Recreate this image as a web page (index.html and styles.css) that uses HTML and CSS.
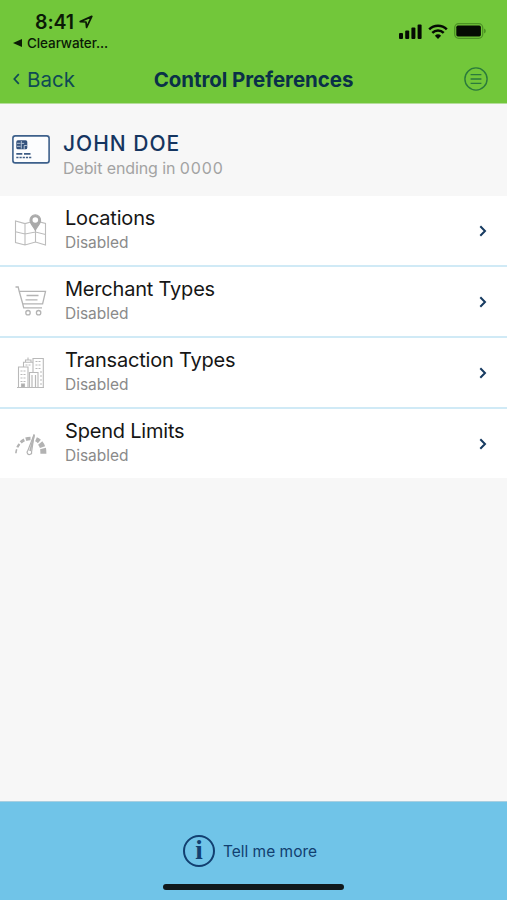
FILE: index.html
```html
<!DOCTYPE html>
<html lang="en">
<head>
    <meta charset="UTF-8">
    <meta name="viewport" content="width=device-width, initial-scale=1.0">
    <title>Control Preferences</title>
    <link rel="stylesheet" href="styles.css">
</head>
<body>
    <header class="header">
        <div class="status-bar">
            <div class="status-left">
                <div class="clock">
                    <span class="time">8:41</span>
                    <svg width="14" height="14" viewBox="0 0 14 14"><path d="M1.2 6.6 12.8 1.4 7.6 12.4 7 7Z" fill="none" stroke="#0b1a06" stroke-width="1.7" stroke-linejoin="round"/></svg>
                </div>
                <div class="return-app">
                    <svg width="9" height="8" viewBox="0 0 9 8"><path d="M0 4 9 0V8Z" fill="#0b1a06"/></svg>
                    <span>Clearwater...</span>
                </div>
            </div>
            <div class="status-right">
                <svg width="23" height="15" viewBox="0 0 23 15" fill="#050b03">
                    <rect x="0" y="9" width="4" height="6" rx="1"/>
                    <rect x="6.2" y="6.6" width="4" height="8.4" rx="1"/>
                    <rect x="12.4" y="3.6" width="4" height="11.4" rx="1"/>
                    <rect x="18.6" y="0.4" width="4" height="14.6" rx="1"/>
                </svg>
                <svg width="20" height="15" viewBox="0 0 20 15" fill="none" stroke="#050b03" stroke-width="2.5">
                    <path d="M1.2 5.4a12.6 12.6 0 0 1 17.6 0"/>
                    <path d="M4.3 8.8a8.2 8.2 0 0 1 11.4 0"/>
                    <path d="M10 15 6.9 11.8a4.5 4.5 0 0 1 6.2 0Z" fill="#050b03" stroke="none"/>
                </svg>
                <svg width="32" height="16" viewBox="0 0 32 16">
                    <rect x="0.7" y="0.7" width="28" height="14.6" rx="4" fill="none" stroke="#4c9324" stroke-width="1.3"/>
                    <rect x="2.3" y="2.6" width="24.6" height="10.8" rx="1.6" fill="#050b03"/>
                    <path d="M30 5.5a2.6 2.6 0 0 1 0 5Z" fill="#4c9324"/>
                </svg>
            </div>
        </div>
        <nav class="nav-bar">
            <a class="back">
                <svg width="7" height="12" viewBox="0 0 7 12"><path d="M5.8 1.2 1.3 6l4.5 4.8" fill="none" stroke="#0f4a55" stroke-width="1.7"/></svg>
                <span>Back</span>
            </a>
            <h1 class="title">Control Preferences</h1>
            <svg class="menu" width="24" height="24" viewBox="0 0 24 24" fill="none" stroke="#2b7a3c" stroke-width="1.4">
                <circle cx="12" cy="12" r="11.1"/>
                <path d="M6.6 7.6h10.8M6.6 12h10.8M6.6 16.4h10.8"/>
            </svg>
        </nav>
    </header>

    <section class="card">
        <svg class="card-icon" width="38" height="29" viewBox="0 0 38 29">
            <rect x="0.9" y="0.9" width="36.2" height="27" rx="2.4" fill="#fcfdfe" stroke="#3d608b" stroke-width="1.6"/>
            <rect x="4.3" y="5.3" width="11" height="9" rx="1.6" fill="#34527d"/>
            <path d="M5 8.3h3.5M5 11.3h3.5M9.3 6v7.6M9.3 8.4h2.9M12.2 14v-3.5h2.6" fill="none" stroke="#c3cfdd" stroke-width="0.9"/>
            <path d="M4.3 18.9h6M12 18.9h6.5" stroke="#3d5c84" stroke-width="1.6"/>
            <path d="M4.3 22.6h15.5" stroke="#3d5c84" stroke-width="1.5" stroke-dasharray="2.2 1"/>
        </svg>
        <div>
            <div class="card-name">JOHN DOE</div>
            <div class="card-number">Debit ending in <span class="digits">0000</span></div>
        </div>
    </section>

    <main class="list">
        <a class="row">
            <svg class="row-icon" width="34" height="34" viewBox="0 0 34 34" fill="none" stroke="#bcbcbc" stroke-width="1.1">
                <path d="M11 10.6 1.5 8v21.5L11 32l10.5-3 10 3V10.5l-6-1.6M11 10.6V32M21.5 16v13M11 10.6l5-1.4M1.5 18.8 11 21l10.5-2 10 2.5"/>
                <path d="M21.3 17.3c-1.3-3.2-5.3-6.3-5.3-10.1a5.3 5.3 0 0 1 10.6 0c0 3.8-4 6.9-5.3 10.1Z" fill="#aaa" stroke="#aaa"/>
                <circle cx="21.3" cy="7" r="2.8" fill="#fff" stroke="none"/>
            </svg>
            <div class="row-text">
                <div class="row-title">Locations</div>
                <div class="row-status">Disabled</div>
            </div>
            <svg class="chevron" width="8" height="12" viewBox="0 0 8 12"><path d="M1.3 1.2 6 6 1.3 10.8"/></svg>
        </a>
        <a class="row">
            <svg class="row-icon" width="34" height="34" viewBox="0 0 34 34" fill="none" stroke="#b4b4b4" stroke-width="1.3">
                <path d="M1.5 3h2.7l1 4.3h26.3l-2.9 12.5H8.7L5.2 7.3M8.7 19.8l1 4H28"/>
                <path d="M12.5 11.5h12M11.5 15.8h12"/>
                <circle cx="14" cy="28.7" r="2.2"/>
                <circle cx="24.6" cy="28.7" r="2.2"/>
            </svg>
            <div class="row-text">
                <div class="row-title">Merchant Types</div>
                <div class="row-status">Disabled</div>
            </div>
            <svg class="chevron" width="8" height="12" viewBox="0 0 8 12"><path d="M1.3 1.2 6 6 1.3 10.8"/></svg>
        </a>
        <a class="row">
            <svg class="row-icon" width="34" height="34" viewBox="0 0 34 34" fill="none" stroke="#b9b9b9" stroke-width="1.1">
                <path d="M3 32.5h27M4.5 32.5V12H14v20.5M9.5 12V7.3H19V17M11.5 7V5H17v2M14 2.5V5M19 17V3.5h10.3v29M15.500 32.5v-15H24v15"/>
                <path d="M6.5 16H12M6.5 19.5H12M6.5 23H12M6.5 26.5H12M21.5 6.5h6M21.5 10h6M21.5 13.5h6M26 17h2M26 21h2M26 25h2M26 29h2M11.5 10h5" stroke-dasharray="2 1"/>
                <path d="M18 20v12M21.500 20v12" stroke-width="1.2"/>
                <rect x="7.5" y="29" width="3" height="3" fill="#aaa"/>
            </svg>
            <div class="row-text">
                <div class="row-title">Transaction Types</div>
                <div class="row-status">Disabled</div>
            </div>
            <svg class="chevron" width="8" height="12" viewBox="0 0 8 12"><path d="M1.3 1.2 6 6 1.3 10.8"/></svg>
        </a>
        <a class="row">
            <svg class="row-icon" width="34" height="34" viewBox="0 0 34 34" fill="none" stroke="#b2b2b2">
                <path d="M1.9 27.2c.1-1.5.3-2.7.8-4" stroke-width="1.6"/>
                <path d="M3.3 21.4c.6-1.4 1.3-2.5 2.2-3.5" stroke-width="2.2"/>
                <path d="M6.7 16.3c1.1-1 2.3-1.8 3.6-2.4" stroke-width="3"/>
                <path d="M11.8 13.2c1.5-.5 2.8-.7 4.7-.7" stroke-width="3.6"/>
                <path d="M22 13.3c1.4.6 2.4 1.3 3.4 2.2" stroke-width="4.5"/>
                <path d="M26.2 17c1.1 1.3 1.8 2.7 2.3 4.1" stroke-width="5.5"/>
                <path d="M29 22.5c.3 1.3.4 2.8.4 5.2" stroke-width="6"/>
                <path d="M20.2 8.3 17.6 25.6a2.3 2.3 0 1 1-3.8-1Z" stroke-width="1.2" fill="#fff"/>
                <path d="M20.2 9 16 25" stroke-width="1.7"/>
            </svg>
            <div class="row-text">
                <div class="row-title">Spend Limits</div>
                <div class="row-status">Disabled</div>
            </div>
            <svg class="chevron" width="8" height="12" viewBox="0 0 8 12"><path d="M1.3 1.2 6 6 1.3 10.8"/></svg>
        </a>
    </main>

    <footer class="footer">
        <a class="tell-more">
            <span class="info">i</span>
            <span>Tell me more</span>
        </a>
        <div class="home-indicator"></div>
    </footer>
</body>
</html>
```
FILE: styles.css
```css
* {
    box-sizing: border-box;
}
body {
    margin: 0;
    height: 900px;
    display: flex;
    flex-direction: column;
    font-family: Inter, "Liberation Sans", sans-serif;
    background: #f7f7f7;
    overflow: hidden;
}
svg {
    display: block;
    flex: none;
}
.header {
    height: 104px;
    background: #72c73a;
    border-bottom: 1px solid #b5dd9b;
}
.status-bar {
    display: flex;
    justify-content: space-between;
    height: 55px;
    padding: 10px 21px 0 13px;
    color: #0b1a06;
}
.clock {
    display: flex;
    align-items: center;
    gap: 5px;
    height: 24px;
    padding-left: 22px;
}
.time {
    font-size: 19.5px;
    font-weight: 600;
    letter-spacing: -0.1px;
}
.return-app {
    display: flex;
    align-items: center;
    gap: 5px;
    height: 18px;
    font-size: 13.5px;
    font-weight: 500;
    letter-spacing: -0.1px;
}
.status-right {
    display: flex;
    align-items: center;
    gap: 6px;
    height: 42px;
}
.nav-bar {
    display: grid;
    grid-template-columns: 1fr auto 1fr;
    align-items: center;
    height: 48px;
    padding: 0 19px 0 13px;
}
.back {
    display: flex;
    align-items: center;
    gap: 7px;
    font-size: 20.5px;
    color: #0f4a55;
}
.title {
    margin: 0 -3px 0 3px;
    font-size: 20.5px;
    font-weight: 700;
    letter-spacing: -0.05px;
    color: #0a3048;
}
.menu {
    justify-self: end;
}
.card {
    display: flex;
    gap: 13px;
    height: 92px;
    padding: 27px 12px 0;
}
.card-icon {
    margin-top: 4px;
}
.card-name {
    font-size: 21px;
    line-height: 26px;
    font-weight: 500;
    letter-spacing: 1px;
    color: #153560;
}
.card-number {
    font-size: 16px;
    line-height: 23px;
    letter-spacing: -0.1px;
    color: #a3a3a3;
}
.digits {
    letter-spacing: 0.9px;
}
.list {
    background: #fff;
}
.row {
    display: flex;
    height: 71px;
    padding: 10px 20px 0 14px;
    border-bottom: 2px solid #d0eaf6;
}
.row:last-child {
    height: 69px;
    border-bottom: none;
}
.row-icon {
    margin-top: 7px;
}
.row-text {
    flex: 1;
    padding-left: 17px;
}
.row-title {
    font-size: 20px;
    line-height: 24px;
    letter-spacing: -0.2px;
    color: #161616;
}
.row-status {
    font-size: 15.5px;
    line-height: 25px;
    color: #8a8a8a;
}
.chevron {
    margin-top: 19px;
    fill: none;
    stroke: #173b61;
    stroke-width: 2;
}
.footer {
    display: flex;
    flex-direction: column;
    align-items: center;
    height: 99px;
    margin-top: auto;
    padding-top: 33px;
    background: #70c4e8;
    border-top: 1px solid #a9cfe0;
}
.tell-more {
    display: flex;
    align-items: center;
    gap: 8px;
    margin-right: 7px;
    font-size: 15.5px;
    color: #123f70;
}
.info {
    width: 32px;
    height: 32px;
    border: 2px solid #123f70;
    border-radius: 50%;
    font-family: "Liberation Serif", serif;
    font-size: 27px;
    line-height: 27px;
    font-weight: 700;
    text-align: center;
}
.home-indicator {
    width: 181px;
    height: 6px;
    margin-top: 17px;
    border-radius: 3px;
    background: #10191c;
}
```
